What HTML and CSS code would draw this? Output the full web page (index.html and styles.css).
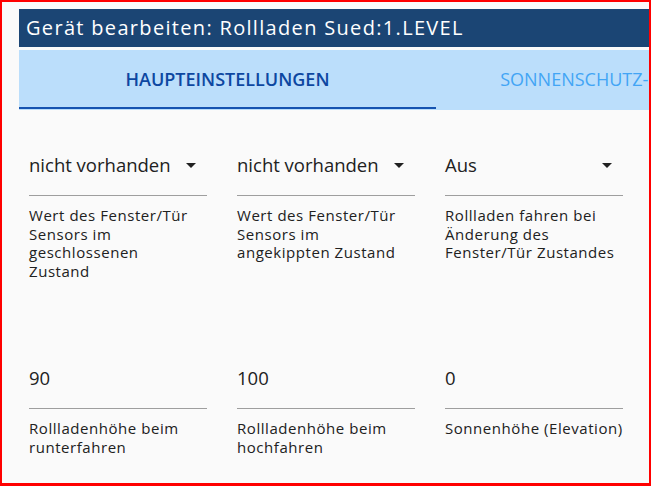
FILE: index.html
```html
<!DOCTYPE html>
<html lang="de">
<head>
    <meta charset="UTF-8">
    <meta name="viewport" content="width=device-width, initial-scale=1.0">
    <title>Gerät bearbeiten</title>
    <link rel="stylesheet" href="styles.css">
</head>
<body>
    <div class="frame">
        <div class="dialog">
            <div class="dialog-title">Gerät bearbeiten: Rollladen Sued:1.LEVEL</div>

            <div class="tabs">
                <div class="tab active">Haupteinstellungen</div>
                <div class="tab">Sonnenschutz-Einstellungen</div>
            </div>

            <div class="form">
                <div class="field">
                    <div class="input select">
                        <span>nicht vorhanden</span>
                        <svg class="arrow" viewBox="0 0 24 24"><path d="M7 10l5 5 5-5z"/></svg>
                    </div>
                    <div class="helper">Wert des Fenster/Tür Sensors im geschlossenen Zustand</div>
                </div>
                <div class="field">
                    <div class="input select">
                        <span>nicht vorhanden</span>
                        <svg class="arrow" viewBox="0 0 24 24"><path d="M7 10l5 5 5-5z"/></svg>
                    </div>
                    <div class="helper">Wert des Fenster/Tür Sensors im angekippten Zustand</div>
                </div>
                <div class="field">
                    <div class="input select">
                        <span>Aus</span>
                        <svg class="arrow" viewBox="0 0 24 24"><path d="M7 10l5 5 5-5z"/></svg>
                    </div>
                    <div class="helper">Rollladen fahren bei Änderung des Fenster/Tür Zustandes</div>
                </div>

                <div class="field">
                    <div class="input">90</div>
                    <div class="helper">Rollladenhöhe beim runterfahren</div>
                </div>
                <div class="field">
                    <div class="input">100</div>
                    <div class="helper">Rollladenhöhe beim hochfahren</div>
                </div>
                <div class="field">
                    <div class="input">0</div>
                    <div class="helper single">Sonnenhöhe (Elevation)</div>
                </div>
            </div>
        </div>
    </div>
</body>
</html>
```

FILE: styles.css
```css
* {
    margin: 0;
    padding: 0;
    box-sizing: border-box;
    font-family: 'Open Sans', 'Noto Sans', sans-serif;
}

body {
    background: #fafafa;
    color: #212121;
}

.frame {
    width: 651px;
    height: 486px;
    border: 2px solid #ff0000;
    border-bottom-width: 3px;
    background: #fafafa;
    overflow: hidden;
    padding: 7px 0 0 17px;
}

.dialog {
    width: 834px;
}

.dialog-title {
    height: 38px;
    line-height: 38px;
    padding-left: 7px;
    margin-bottom: 3px;
    background: #1b4574;
    color: #fff;
    font-size: 20px;
    letter-spacing: 1.32px;
    white-space: nowrap;
}

.tabs {
    display: flex;
    height: 60px;
    padding-bottom: 1px;
    background: #bbdefb;
}

.tab {
    width: 417px;
    display: flex;
    align-items: center;
    justify-content: center;
    padding-top: 1px;
    text-transform: uppercase;
    font-size: 18px;
    color: #42a5f5;
    white-space: nowrap;
    border-bottom: 2px solid transparent;
}

.tab.active {
    color: #0d47a1;
    font-weight: 600;
    border-bottom-color: #1553b0;
}

.form {
    display: grid;
    grid-template-columns: repeat(3, 178px);
    column-gap: 30px;
    row-gap: 86px;
    padding: 43px 0 0 10px;
}

.input {
    font-size: 18.5px;
    line-height: 24px;
    padding-bottom: 18px;
    border-bottom: 1px solid #9e9e9e;
}

.select {
    display: flex;
    align-items: center;
    justify-content: space-between;
    padding-right: 4px;
}

.arrow {
    width: 24px;
    height: 24px;
    fill: #212121;
}

.helper {
    width: 173px;
    margin-top: 10px;
    min-height: 74px;
    font-size: 15px;
    letter-spacing: 0.55px;
    line-height: 18.5px;
}

.helper.single {
    white-space: nowrap;
}
```
